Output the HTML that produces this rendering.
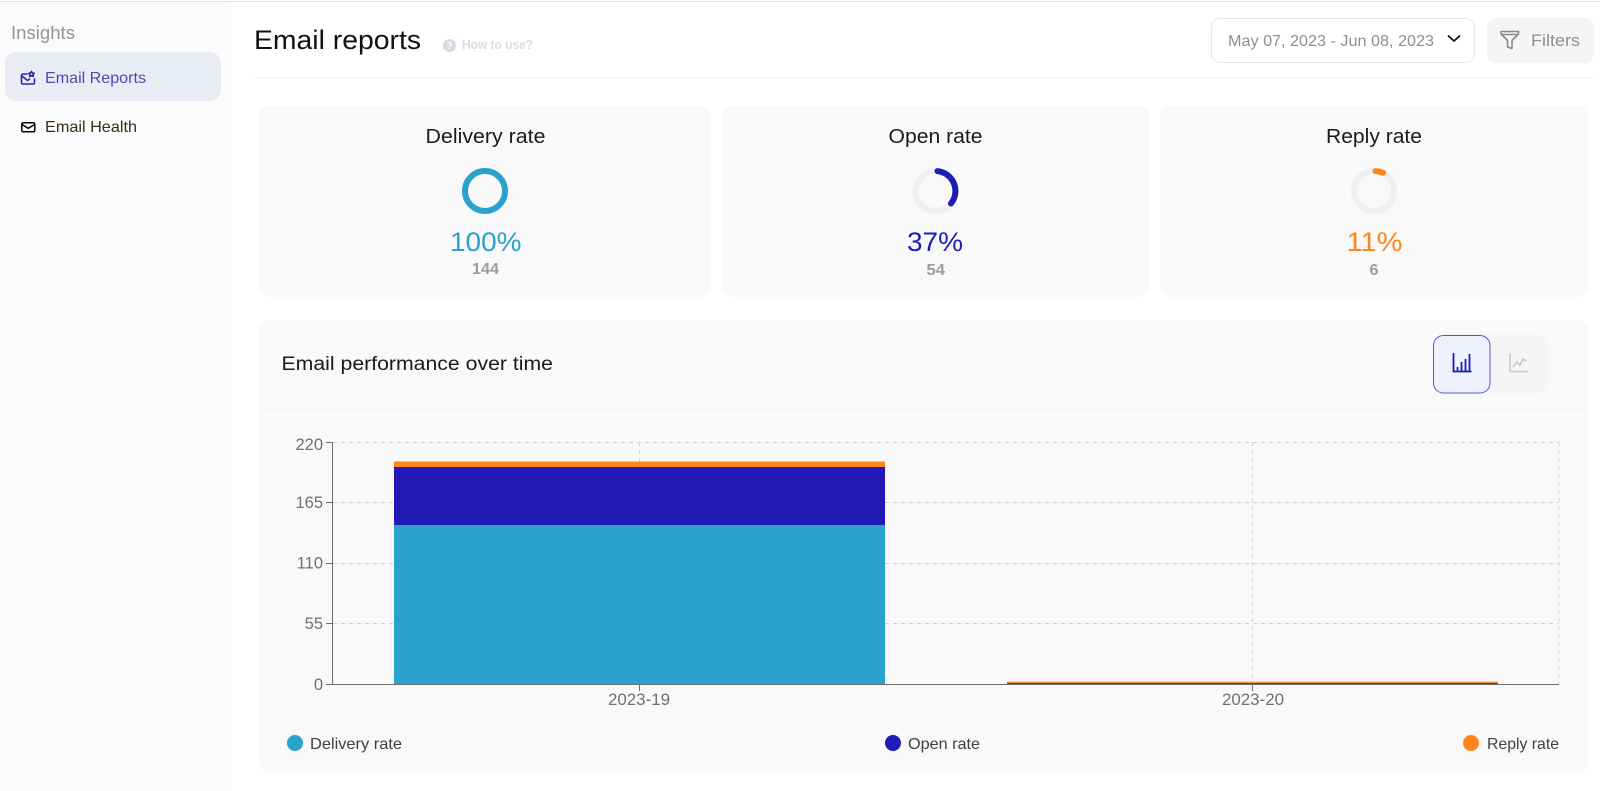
<!DOCTYPE html>
<html lang="en">
<head>
<meta charset="utf-8">
<title>Email reports</title>
<style>
html,body{margin:0;padding:0;width:1600px;height:791px;overflow:hidden;background:#fff}
svg{display:block}
text{font-family:"Liberation Sans",sans-serif}
</style>
</head>
<body>
<svg width="1600" height="791" viewBox="0 0 1600 791" xmlns="http://www.w3.org/2000/svg">
<rect width="1600" height="791" fill="#fff"/>
<rect x="0" y="2" width="231" height="789" fill="#fbfbfc"/>
<rect x="0" y="1" width="1600" height="1" fill="#e3e3e3"/>

<!-- Sidebar -->
<text x="11" y="39" font-size="18" fill="#959595" textLength="64" lengthAdjust="spacingAndGlyphs">Insights</text>
<rect x="5" y="52" width="216" height="49" rx="11" fill="#e9ecf2"/>
<g fill="none" stroke="#2a23b8" stroke-width="1.600" stroke-linecap="round" stroke-linejoin="round">
<path d="M27 74H23a1.500 1.500 0 0 0-1.500 1.500V82.500A1.500 1.500 0 0 0 23 84H33a1.500 1.500 0 0 0 1.500-1.500V79"/>
<path d="M22 76l5.500 4.500 2-1.500"/>
<path d="M31.500 71.500l1 1.500 1.700.3-1.100 1.300.2 1.800-1.800-.8-1.800.8.200-1.800-1.100-1.300 1.700-.3z"/>
</g>
<text x="45" y="83" font-size="16" fill="#4f48b4" textLength="101" lengthAdjust="spacingAndGlyphs">Email Reports</text>
<g fill="none" stroke="#000" stroke-width="1.500" stroke-linejoin="round">
<rect x="21.800" y="122.800" width="13" height="9" rx="1.500"/>
<path d="M22 124.500l6.300 3.800 6.300-3.800"/>
</g>
<text x="45" y="132" font-size="16" fill="#3a2d14" textLength="92" lengthAdjust="spacingAndGlyphs">Email Health</text>

<!-- Header -->
<text x="254" y="49" font-size="27" fill="#111" textLength="167" lengthAdjust="spacingAndGlyphs">Email reports</text>
<circle cx="449.500" cy="45.500" r="6.500" fill="#d5dae6"/>
<text x="449.500" y="49" font-size="10" font-weight="bold" fill="#fff" text-anchor="middle">?</text>
<text x="462" y="49" font-size="12.500" font-weight="bold" fill="#dcdcdc" textLength="71" lengthAdjust="spacingAndGlyphs">How to use?</text>

<rect x="1211.500" y="18.500" width="263" height="44" rx="9" fill="#fff" stroke="#e8e8e8"/>
<text x="1228" y="46" font-size="16" fill="#8f8f8f" textLength="206" lengthAdjust="spacingAndGlyphs">May 07, 2023 - Jun 08, 2023</text>
<path d="M1448.500 36l5.500 5 5.500-5" fill="none" stroke="#111" stroke-width="1.800" stroke-linecap="round" stroke-linejoin="round"/>
<rect x="1487" y="18" width="107" height="45" rx="9" fill="#f5f5f5"/>
<g fill="none" stroke="#8a8a8e" stroke-width="1.600" stroke-linejoin="round" stroke-linecap="round">
<path d="M1501 31.500h17.500v2.500l-6.500 6.500v8l-4.500-1.500v-6.500l-6.500-6.500z"/>
<path d="M1501.500 34.500h16.500"/>
</g>
<text x="1531" y="46" font-size="17" fill="#8f8f8f" textLength="49" lengthAdjust="spacingAndGlyphs">Filters</text>
<rect x="253" y="77" width="1341" height="1" fill="#f3f3f3"/>

<!-- KPI cards -->
<rect x="259" y="106" width="452" height="191" rx="10" fill="#f9f9fa"/>
<rect x="722" y="106" width="427" height="191" rx="10" fill="#f9f9fa"/>
<rect x="1160" y="106" width="428" height="191" rx="10" fill="#f9f9fa"/>

<text x="425.500" y="143" font-size="20" fill="#1a1a1a" textLength="120" lengthAdjust="spacingAndGlyphs">Delivery rate</text>
<circle cx="485" cy="191" r="20" fill="none" stroke="#2aa3cc" stroke-width="6"/>
<text x="450" y="251" font-size="27" fill="#2aa3cc" textLength="71.500" lengthAdjust="spacingAndGlyphs">100%</text>
<text x="472" y="274" font-size="15.500" font-weight="bold" fill="#9c9c9c" textLength="27" lengthAdjust="spacingAndGlyphs">144</text>

<text x="888.500" y="143" font-size="20" fill="#1a1a1a" textLength="94" lengthAdjust="spacingAndGlyphs">Open rate</text>
<circle cx="935.500" cy="191" r="20" fill="none" stroke="#efefef" stroke-width="6"/>
<path d="M937.500 171.100A20 20 0 0 1 951 203.500" fill="none" stroke="#1f1bb5" stroke-width="6" stroke-linecap="round"/>
<text x="907" y="251" font-size="27" fill="#1f1bb5" textLength="56" lengthAdjust="spacingAndGlyphs">37%</text>
<text x="926.500" y="275" font-size="15.500" font-weight="bold" fill="#9c9c9c" textLength="18.500" lengthAdjust="spacingAndGlyphs">54</text>

<text x="1326" y="143" font-size="20" fill="#1a1a1a" textLength="96" lengthAdjust="spacingAndGlyphs">Reply rate</text>
<circle cx="1374" cy="191" r="20" fill="none" stroke="#efefef" stroke-width="6"/>
<path d="M1375.500 171.100A20 20 0 0 1 1383 172.700" fill="none" stroke="#ff851b" stroke-width="6" stroke-linecap="round"/>
<text x="1346.500" y="251" font-size="27" fill="#ff851b" textLength="56" lengthAdjust="spacingAndGlyphs">11%</text>
<text x="1369.500" y="275" font-size="15.500" font-weight="bold" fill="#9c9c9c" textLength="9" lengthAdjust="spacingAndGlyphs">6</text>

<!-- Chart card -->
<rect x="259" y="320" width="1329" height="452" rx="10" fill="#f9f9f9"/>
<rect x="259" y="409" width="1329" height="1" fill="#f1f1f6"/>
<text x="281.500" y="370" font-size="19" fill="#1a1a1a" textLength="271.500" lengthAdjust="spacingAndGlyphs">Email performance over time</text>

<rect x="1433" y="334" width="115" height="60" rx="11" fill="#f5f5f5"/>
<rect x="1433.500" y="335.500" width="56.500" height="57.500" rx="10" fill="#eef2fd" stroke="#5a55c8"/>
<g fill="none" stroke="#1f1bb5" stroke-width="1.800">
<path d="M1453.500 353v18.500H1471.500"/>
<path d="M1457.500 371v-4M1461.500 371v-9M1465.500 371v-12M1469.500 371v-17"/>
</g>
<g fill="none" stroke="#c9c9c9" stroke-width="1.600" stroke-linejoin="round">
<path d="M1510 353.500v18h18"/>
<path d="M1513 367l4-5 3 3 3-6 3 2"/>
</g>

<!-- Grid -->
<g stroke="#d2d2d2" stroke-width="1" stroke-dasharray="4 4" fill="none">
<path d="M333 442.500H1559"/>
<path d="M333 502.500H1559"/>
<path d="M333 563.500H1559"/>
<path d="M333 623.500H1559"/>
<path d="M639.500 442V684"/>
<path d="M1252.500 442V684"/>
<path d="M1559 442V684"/>
</g>

<!-- Bars -->
<rect x="394" y="525" width="491" height="159" fill="#2aa3cc"/>
<rect x="394" y="467" width="491" height="58" fill="#2019b4"/>
<rect x="394" y="461.500" width="491" height="5.500" fill="#ff851b"/>
<rect x="1007" y="681.500" width="491" height="2" fill="#ff9a40"/>
<rect x="1007" y="683" width="491" height="1" fill="#3a35a8"/>

<!-- Axes -->
<g stroke="#6e6e6e" stroke-width="1" fill="none">
<path d="M332.500 442V684.500H1559"/>
<path d="M326 442.500H332M326 502.500H332M326 563.500H332M326 623.500H332M326 684.500H332"/>
<path d="M639.500 684V691M1252.500 684V691"/>
</g>
<g font-size="16.500" fill="#707070" text-anchor="end">
<text x="323" y="450">220</text>
<text x="323" y="508">165</text>
<text x="323" y="568.500">110</text>
<text x="323" y="629">55</text>
<text x="323" y="690">0</text>
</g>
<text x="608" y="705" font-size="16.500" fill="#707070" textLength="62" lengthAdjust="spacingAndGlyphs">2023-19</text>
<text x="1222" y="705" font-size="16.500" fill="#707070" textLength="62" lengthAdjust="spacingAndGlyphs">2023-20</text>

<!-- Legend -->
<circle cx="295" cy="743" r="8" fill="#2aa3cc"/>
<text x="310" y="749" font-size="16" fill="#3f3f3f" textLength="92" lengthAdjust="spacingAndGlyphs">Delivery rate</text>
<circle cx="893" cy="743" r="8" fill="#1f1bb5"/>
<text x="908" y="749" font-size="16" fill="#3f3f3f" textLength="72" lengthAdjust="spacingAndGlyphs">Open rate</text>
<circle cx="1471" cy="743" r="8" fill="#ff851b"/>
<text x="1487" y="749" font-size="16" fill="#3f3f3f" textLength="72" lengthAdjust="spacingAndGlyphs">Reply rate</text>
</svg>
</body>
</html>
